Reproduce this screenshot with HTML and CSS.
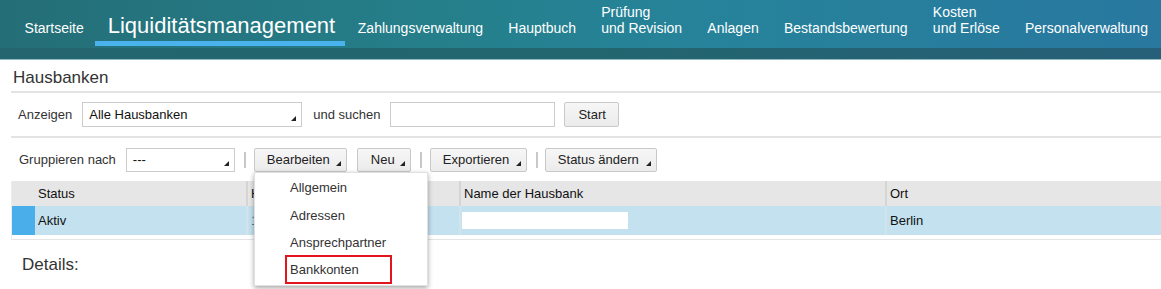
FILE: index.html
```html
<!DOCTYPE html>
<html lang="de">
<head>
<meta charset="utf-8">
<title>Hausbanken</title>
<link rel="stylesheet" href="styles.css">
</head>
<body>
<header class="topbar">
  <nav class="nav">
    <a class="nav-item first">Startseite</a>
    <a class="nav-item active">Liquiditätsmanagement</a>
    <a class="nav-item">Zahlungsverwaltung</a>
    <a class="nav-item">Hauptbuch</a>
    <a class="nav-item">Prüfung<br>und Revision</a>
    <a class="nav-item">Anlagen</a>
    <a class="nav-item">Bestandsbewertung</a>
    <a class="nav-item">Kosten<br>und Erlöse</a>
    <a class="nav-item">Personalverwaltung</a>
  </nav>
  <div class="substrip"></div>
</header>

<main class="panel">
  <h1 class="title">Hausbanken</h1>

  <div class="toolbar row1">
    <span class="label">Anzeigen</span>
    <div class="select sel-wide">Alle Hausbanken<i class="corner"></i></div>
    <span class="label">und suchen</span>
    <div class="input"></div>
    <button class="btn start">Start</button>
  </div>

  <div class="toolbar row2">
    <span class="label">Gruppieren nach</span>
    <div class="select sel-group">---<i class="corner"></i></div>
    <span class="sep"></span>
    <button class="btn b-edit">Bearbeiten<i class="corner"></i></button>
    <button class="btn b-new">Neu<i class="corner"></i></button>
    <span class="sep"></span>
    <button class="btn b-exp">Exportieren<i class="corner"></i></button>
    <span class="sep"></span>
    <button class="btn b-status">Status ändern<i class="corner"></i></button>
  </div>

  <div class="table">
    <div class="tr head">
      <div class="td mark"></div>
      <div class="td">Status</div>
      <div class="td">H</div>
      <div class="td">Name der Hausbank</div>
      <div class="td">Ort</div>
    </div>
    <div class="tr body">
      <div class="td mark sel"></div>
      <div class="td">Aktiv</div>
      <div class="td id">1</div>
      <div class="td"><span class="blank"></span></div>
      <div class="td">Berlin</div>
    </div>
  </div>

  <div class="details">Details:</div>

  <div class="menu">
    <div class="menu-item">Allgemein</div>
    <div class="menu-item">Adressen</div>
    <div class="menu-item">Ansprechpartner</div>
    <div class="menu-item"><span class="highlight">Bankkonten</span></div>
  </div>
</main>
</body>
</html>
```

FILE: styles.css
```css
* { box-sizing: border-box; }

html, body { min-height: 289px; }

body {
  margin: 0;
  font-family: "Liberation Sans", Arial, sans-serif;
  color: #333;
  background: #fff;
  overflow: hidden;
}

.topbar {
  background: linear-gradient(90deg, #246e77 0%, #25808c 40%, #26839a 60%, #2878a0 100%);
}

.nav {
  height: 48px;
  display: flex;
  align-items: flex-end;
  padding-left: 12px;
}

.nav-item {
  color: #fff;
  font-size: 14px;
  line-height: 16px;
  padding: 0 12.6px 12px;
  white-space: nowrap;
}

.nav-item.first { padding-right: 11px; }

.nav-item.active {
  font-size: 22px;
  line-height: 24px;
  padding: 0 10px 3px 13px;
  border-bottom: 5px solid #4ab2ec;
  margin-bottom: 2px;
  margin-right: 0;
}

.substrip {
  height: 12px;
  background: linear-gradient(90deg, #246570 0%, #23666f 50%, #265f78 100%);
  border-bottom: 1px solid #8fbcc2;
}

.panel {
  position: relative;
  padding: 8px 0 0 11px;
}

.title {
  margin: 0 0 3px 2px;
  font-size: 17px;
  line-height: 20px;
  font-weight: normal;
  color: #333;
}

.toolbar {
  display: flex;
  align-items: center;
  border-top: 2px solid #e3e3e3;
  font-size: 13px;
}

.row1 {
  padding: 9px 0 9px 7px;
  height: 45px;
}

.row2 {
  padding: 9px 0 9px 8px;
  height: 45px;
}

.label { color: #333; }

.select, .input {
  position: relative;
  height: 25px;
  border: 1px solid #ccc;
  background: #fff;
  display: flex;
  align-items: center;
  padding-left: 6px;
  color: #111;
}

.sel-wide { width: 220px; margin: 0 11px 0 10px; }
.input { width: 165px; margin-left: 10px; }
.sel-group { width: 109px; height: 24px; margin: 0 0 0 10px; }

.corner {
  position: absolute;
  right: 5px;
  bottom: 5px;
  width: 0;
  height: 0;
  border-left: 5px solid transparent;
  border-bottom: 5px solid #222;
}

.btn {
  position: relative;
  height: 24px;
  font-family: inherit;
  font-size: 13px;
  color: #222;
  background: linear-gradient(#f6f6f6, #ebebeb);
  border: 1px solid #c9c9c9;
  border-radius: 2px;
  padding: 0 0 0 12px;
  text-align: left;
}

.start { width: 55px; height: 25px; margin-left: 9px; padding-left: 13px; }
.b-edit { width: 93px; margin-left: 8px; }
.b-new { width: 54px; margin-left: 10px; padding-left: 13px; }
.b-exp { width: 97px; margin-left: 8px; }
.b-status { width: 112px; margin-left: 7px; }

.sep {
  flex: none;
  width: 2px;
  height: 16px;
  margin-left: 9px;
  background: #c8c8c8;
}

.table {
  font-size: 13px;
  color: #111;
  border-bottom: 1px solid #e4e4e4;
  border-left: 1px solid #ececec;
  padding-bottom: 4px;
}

.tr {
  display: grid;
  grid-template-columns: 23px 211px 213px 426px 1fr;
}

.tr.head {
  height: 25px;
  background: #e6e6e6;
}

.tr.body {
  height: 29px;
  background: #c4e1ef;
}

.td {
  display: flex;
  align-items: center;
  padding-left: 3px;
  border-left: 2px solid #d5d5d5;
}

.tr.body .td { border-left-color: #d2e3ec; }
.td.mark { border-left: none; padding: 0; }
.td.mark + .td { border-left: none; }
.td.mark.sel { background: #4aaeea; }

.td.id { color: #4d7fa0; }

.blank {
  display: block;
  width: 166px;
  height: 17px;
  background: #fff;
  margin-left: -2px;
}

.details {
  font-size: 17px;
  color: #333;
  padding: 15px 0 0 11px;
}

.menu {
  position: absolute;
  left: 254px;
  top: 112px;
  width: 174px;
  height: 114px;
  background: #fff;
  border: 1px solid #e0e0e0;
  box-shadow: 0 2px 5px rgba(0, 0, 0, 0.35);
  padding-top: 1px;
  font-size: 13px;
  color: #333;
}

.menu-item {
  height: 27.5px;
  display: flex;
  align-items: center;
  padding-left: 35px;
}

.highlight {
  display: inline-block;
  border: 2px solid #e2141c;
  padding: 5px 31px 5px 3px;
  margin-left: -5px;
  margin-top: -2px;
}
```
